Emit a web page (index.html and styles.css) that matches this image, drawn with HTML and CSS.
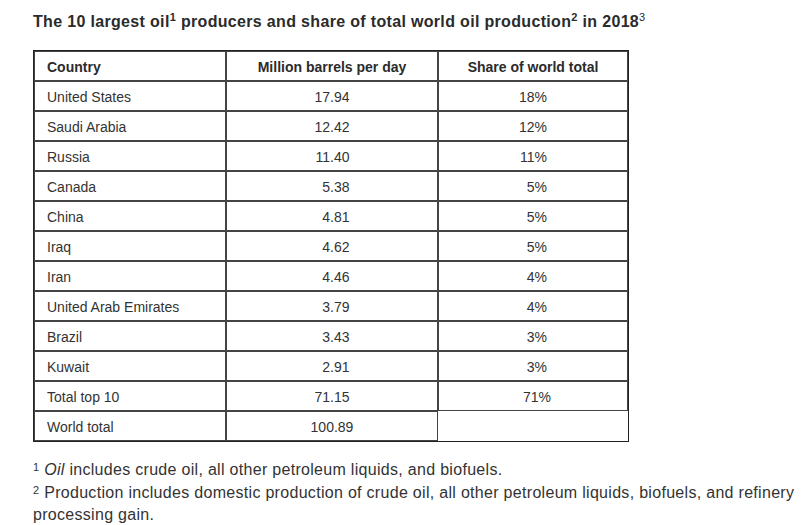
FILE: index.html
```html
<!DOCTYPE html>
<html lang="en">
<head>
<meta charset="utf-8">
<title>The 10 largest oil producers</title>
<link rel="stylesheet" href="styles.css">
</head>
<body>
<div class="page">
  <h2 class="title">The 10 largest oil<sup class="sup-b">1</sup> producers and share of total world oil production<sup class="sup-b">2</sup> in 2018<sup class="sup-n">3</sup></h2>
  <table class="data">
    <colgroup>
      <col class="c1"><col class="c2"><col class="c3">
    </colgroup>
    <thead>
      <tr><th class="left">Country</th><th>Million barrels per day</th><th>Share of world total</th></tr>
    </thead>
    <tbody>
      <tr><td class="left">United States</td><td><span class="num">17.94</span></td><td><span class="pct">18%</span></td></tr>
      <tr><td class="left">Saudi Arabia</td><td><span class="num">12.42</span></td><td><span class="pct">12%</span></td></tr>
      <tr><td class="left">Russia</td><td><span class="num">11.40</span></td><td><span class="pct">11%</span></td></tr>
      <tr><td class="left">Canada</td><td><span class="num">5.38</span></td><td><span class="pct">5%</span></td></tr>
      <tr><td class="left">China</td><td><span class="num">4.81</span></td><td><span class="pct">5%</span></td></tr>
      <tr><td class="left">Iraq</td><td><span class="num">4.62</span></td><td><span class="pct">5%</span></td></tr>
      <tr><td class="left">Iran</td><td><span class="num">4.46</span></td><td><span class="pct">4%</span></td></tr>
      <tr><td class="left">United Arab Emirates</td><td><span class="num">3.79</span></td><td><span class="pct">4%</span></td></tr>
      <tr><td class="left">Brazil</td><td><span class="num">3.43</span></td><td><span class="pct">3%</span></td></tr>
      <tr><td class="left">Kuwait</td><td><span class="num">2.91</span></td><td><span class="pct">3%</span></td></tr>
      <tr><td class="left">Total top 10</td><td><span class="num">71.15</span></td><td><span class="pct pct-shift">71%</span></td></tr>
      <tr><td class="left">World total</td><td><span class="num">100.89</span></td><td></td></tr>
    </tbody>
  </table>
  <div class="notes">
    <p class="note"><sup class="fn">1</sup> <em>Oil</em> includes crude oil, all other petroleum liquids, and biofuels.</p>
    <p class="note"><sup class="fn">2</sup> Production includes domestic production of crude oil, all other petroleum liquids, biofuels, and refinery processing gain.</p>
  </div>
</div>
</body>
</html>
```

FILE: styles.css
```css
html, body {
  margin: 0;
  padding: 0;
  background: #ffffff;
}

body {
  font-family: "Liberation Sans", Arial, sans-serif;
  color: #333333;
}

.page {
  padding: 12px 0 0 33px;
}

.title {
  margin: 0 0 18px 0;
  font-size: 16px;
  line-height: 20px;
  font-weight: bold;
  letter-spacing: 0.33px;
  color: #2b2b2b;
  white-space: nowrap;
}

.title sup {
  font-size: 11px;
  line-height: 1;
  vertical-align: 6px;
}

.sup-b { font-weight: bold; }
.sup-n { font-weight: normal; }

.data {
  border-collapse: separate;
  border-spacing: 0;
  border: 1px solid #222222;
  table-layout: fixed;
  width: 596px;
  empty-cells: hide;
  font-size: 14px;
}

.c1 { width: 192px; }
.c2 { width: 212px; }
.c3 { width: 190px; }

.data th,
.data td {
  border: 1px solid #444444;
  height: 26px;
  padding: 2px 12px 0 12px;
  line-height: 26px;
  text-align: center;
  color: #333333;
  white-space: nowrap;
}

.data th {
  font-weight: bold;
  color: #2b2b2b;
}

.data .left {
  text-align: left;
}

.num {
  display: inline-block;
  min-width: 35px;
  text-align: right;
}

.pct {
  display: inline-block;
  min-width: 28px;
  text-align: right;
}

.pct-shift {
  margin-left: 8px;
}

.notes {
  margin-top: 17px;
}

.note {
  margin: 0;
  font-size: 16px;
  line-height: 22.5px;
  letter-spacing: 0.3px;
  color: #333333;
}

.fn {
  font-size: 11px;
  line-height: 1;
  vertical-align: 4px;
}
```
